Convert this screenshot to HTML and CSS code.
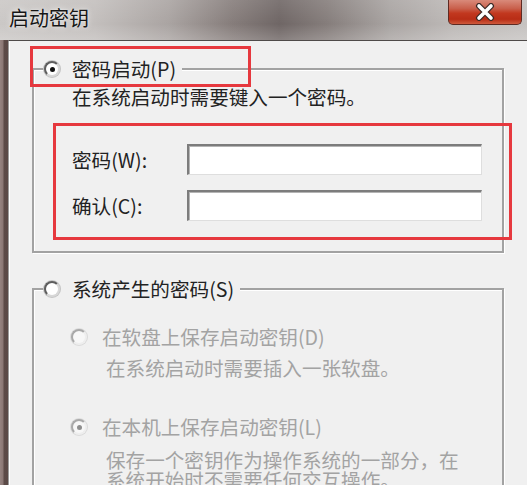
FILE: index.html
```html
<!DOCTYPE html>
<html lang="zh-CN">
<head>
<meta charset="utf-8">
<title>启动密钥</title>
<link rel="stylesheet" href="styles.css">
</head>
<body>
<div class="window">
  <div class="titlebar">
    <span class="title">启动密钥</span>
    <span class="close">
      <svg width="24" height="18" viewBox="0 0 24 18">
        <path d="M6 3 L18 15 M18 3 L6 15" stroke="#3c2a26" stroke-width="6" stroke-linecap="round" fill="none"/>
        <path d="M6 3 L18 15 M18 3 L6 15" stroke="#ffffff" stroke-width="3.6" stroke-linecap="round" fill="none"/>
      </svg>
    </span>
  </div>
  <div class="frame">
    <div class="client">
      <section class="group g1">
        <div class="legend"><span class="radio checked"></span><span class="label">密码启动(P)</span></div>
        <p class="desc">在系统启动时需要键入一个密码。</p>
        <div class="fields">
          <div class="field"><span class="flabel">密码(W):</span><span class="input"></span></div>
          <div class="field"><span class="flabel">确认(C):</span><span class="input"></span></div>
        </div>
      </section>
      <section class="group g2">
        <div class="legend"><span class="radio"></span><span class="label">系统产生的密码(S)</span></div>
        <div class="option opt1 disabled"><span class="radio"></span><span class="label">在软盘上保存启动密钥(D)</span></div>
        <p class="desc sub d2">在系统启动时需要插入一张软盘。</p>
        <div class="option opt2 disabled"><span class="radio checked"></span><span class="label">在本机上保存启动密钥(L)</span></div>
        <p class="desc sub d3">保存一个密钥作为操作系统的一部分，在<br>系统开始时不需要任何交互操作。</p>
      </section>
    </div>
  </div>
  <div class="mark mark1"></div>
  <div class="mark mark2"></div>
</div>
</body>
</html>
```
FILE: styles.css
```css
html, body {
  margin: 0;
  padding: 0;
}
body {
  width: 527px;
  height: 485px;
  overflow: hidden;
  background: #f0f0f0;
  font-family: "Noto Sans CJK SC", "Noto Sans", sans-serif;
  font-size: 19.6px;
  color: #222222;
}
.window {
  position: relative;
  width: 527px;
  height: 485px;
  display: flex;
  flex-direction: column;
  overflow: hidden;
}
.titlebar {
  height: 40px;
  flex: none;
  display: flex;
  justify-content: space-between;
  align-items: flex-start;
  background:
    linear-gradient(180deg, rgba(255,255,255,0.10) 0%, rgba(255,255,255,0) 60%, rgba(255,255,255,0.18) 100%),
    linear-gradient(90deg, #cbc8c6 0%, #c3bfbd 18%, #aaa4a2 32%, #867d7b 44%, #6f6665 53%, #857d7b 62%, #a9a4a2 74%, #bdb9b7 86%, #c6c3c1 100%);
}
.title {
  margin: 5px 0 0 9px;
  font-size: 20px;
  line-height: 26px;
  color: #161616;
  text-shadow: 0 0 6px rgba(255,255,255,0.8), 0 0 2px rgba(255,255,255,0.7);
}
.close {
  width: 74px;
  height: 25px;
  margin-right: 5px;
  box-sizing: border-box;
  border: 1px solid #5e2a22;
  border-top: none;
  border-radius: 0 0 5px 5px;
  background: linear-gradient(180deg, #d98a7a 0%, #c9604c 35%, #c2381f 55%, #b82d16 80%, #cf5a3c 100%);
  display: flex;
  justify-content: center;
  align-items: center;
}
.frame {
  flex: 1;
  display: flex;
  padding-left: 8px;
  background: linear-gradient(90deg, #958380 0, #8a7774 3px, #5c4b48 4px, #5a4946 8px);
}
.client {
  flex: 1;
  background: #f0f0f0;
  border-top: 1px solid #4e4a49;
  border-left: 1px solid #9c9c9c;
  box-shadow: inset 1px 0 0 #ffffff;
  padding-left: 23px;
  display: flex;
  flex-direction: column;
  align-items: flex-start;
}
.group {
  box-sizing: border-box;
  width: 472px;
  border: 2px solid #a2a2a2;
  box-shadow: inset 1px 1px 0 #ffffff, 1px 1px 0 #ffffff;
}
.g1 {
  margin-top: 27px;
  padding-bottom: 30px;
}
.g2 {
  margin-top: 35px;
  padding-bottom: 40px;
}
.legend {
  display: flex;
  align-items: center;
  width: fit-content;
  height: 24px;
  margin: -13px 0 0 10px;
  padding: 0 6px 0 0;
  background: #f0f0f0;
  line-height: 24px;
}
.legend .label {
  margin-left: 12px;
}
.radio {
  position: relative;
  box-sizing: border-box;
  width: 16px;
  height: 16px;
  border-radius: 50%;
  background: #ffffff;
  border: 2px solid;
  border-color: #5e5e5e #d8d8d8 #d8d8d8 #5e5e5e;
  box-shadow: 0 0 0 1px #c4c4c4;
  flex: none;
}
.radio.checked::after {
  content: "";
  position: absolute;
  left: 3.5px;
  top: 3.5px;
  width: 5px;
  height: 5px;
  border-radius: 50%;
  background: #111111;
}
.desc {
  margin: 4px 0 0 38px;
  line-height: 24px;
  white-space: nowrap;
}
.fields {
  margin-top: 35px;
  display: flex;
  flex-direction: column;
  gap: 15px;
}
.field {
  display: flex;
  align-items: center;
  padding-left: 38px;
}
.flabel {
  width: 115px;
  line-height: 24px;
}
.input {
  box-sizing: border-box;
  width: 295px;
  height: 31px;
  background: #ffffff;
  border-top: 2px solid #7c7c7c;
  border-left: 2px solid #7c7c7c;
  border-right: 1px solid #dedede;
  border-bottom: 1px solid #dedede;
  box-shadow: inset 1px 1px 0 #b4b4b4;
}
.option {
  display: flex;
  align-items: center;
  line-height: 24px;
  padding-left: 37px;
}
.option .label {
  margin-left: 15px;
}
.opt1 {
  margin-top: 24px;
}
.opt2 {
  margin-top: 35px;
}
.disabled {
  color: #a3a3a3;
}
.disabled .radio {
  border-color: #a9a9a9 #eeeeee #eeeeee #a9a9a9;
  box-shadow: 0 0 0 1px #dadada;
  background: #f7f7f7;
}
.disabled .radio.checked::after {
  background: #8e8e8e;
}
.sub {
  margin-left: 72px;
  color: #a3a3a3;
}
.d2 {
  margin-top: 7px;
}
.d3 {
  margin-top: 11px;
  line-height: 20px;
}
.mark {
  position: absolute;
  box-sizing: border-box;
  border: 3px solid #e6383e;
}
.mark1 {
  left: 30px;
  top: 46px;
  width: 221px;
  height: 41px;
}
.mark2 {
  left: 53px;
  top: 123px;
  width: 459px;
  height: 117px;
}
```
